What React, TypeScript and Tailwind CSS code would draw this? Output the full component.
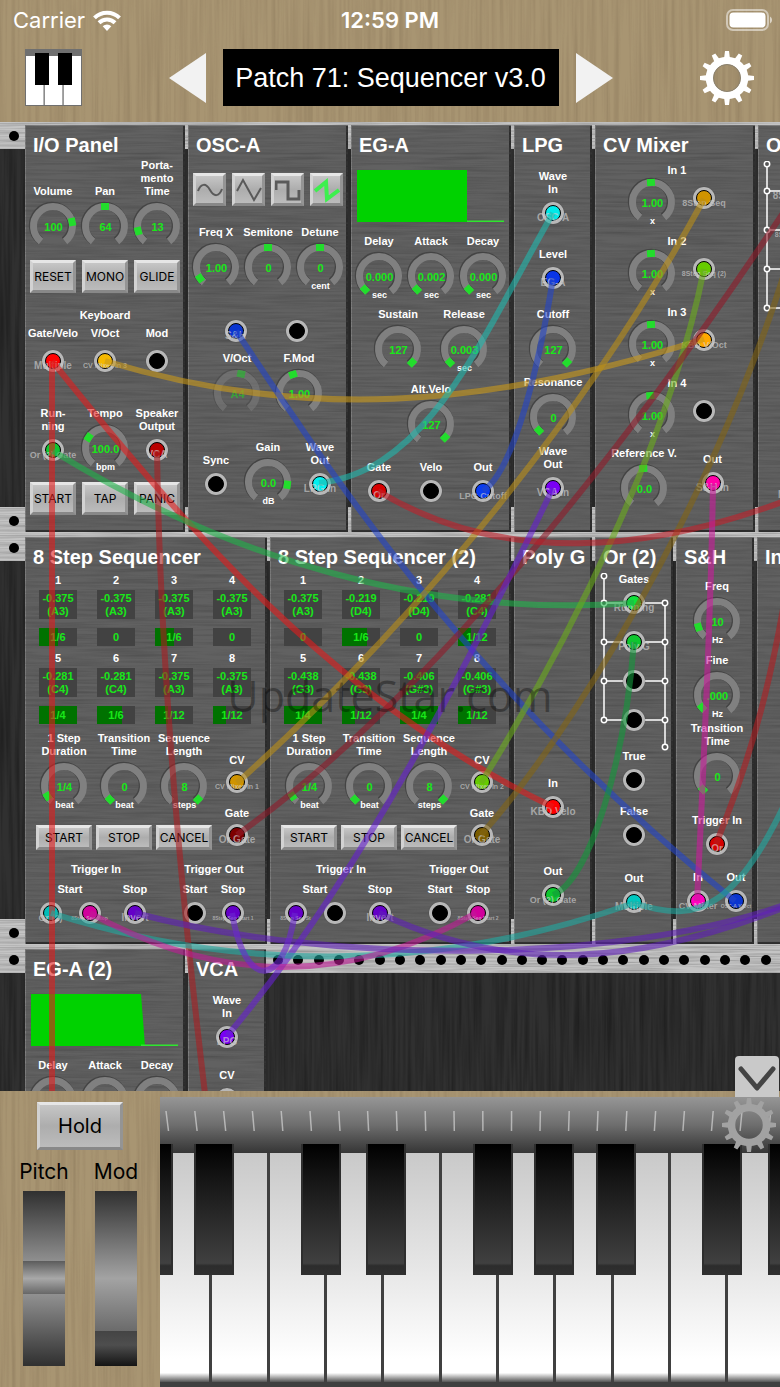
import type { ReactNode } from "react";

type TagSize = "lg" | "md" | "sm" | "xs";

const tagSizes: Record<TagSize, string> = {
  lg: "text-[10px]",
  md: "text-[9px]",
  sm: "text-[7px]",
  xs: "text-[5px]",
};

// ---------- textures ----------

function Textures() {
  return (
    <svg className="absolute size-0" aria-hidden="true">
      <filter id="wood" x="0" y="0" width="100%" height="100%">
        <feTurbulence type="fractalNoise" baseFrequency="0.25 0.006" numOctaves="3" seed="4" />
        <feColorMatrix values="0 0 0 0 0.25  0 0 0 0 0.18  0 0 0 0 0.1  1.6 0 0 0 -0.62" />
      </filter>
      <filter id="brushed" x="0" y="0" width="100%" height="100%">
        <feTurbulence type="fractalNoise" baseFrequency="0.012 0.6" numOctaves="3" seed="9" />
        <feColorMatrix values="0 0 0 0 0.1  0 0 0 0 0.1  0 0 0 0 0.1  1.5 0 0 0 -0.55" />
      </filter>
      <filter id="panel" x="0" y="0" width="100%" height="100%">
        <feTurbulence type="fractalNoise" baseFrequency="0.014 0.4" numOctaves="3" seed="6" />
        <feColorMatrix values="0 0 0 0 0.06  0 0 0 0 0.06  0 0 0 0 0.06  1.7 0 0 0 -0.62" />
      </filter>
      <filter id="slats" x="0" y="0" width="100%" height="100%">
        <feTurbulence type="fractalNoise" baseFrequency="0.25 0.008" numOctaves="3" seed="2" />
        <feColorMatrix values="0 0 0 0 0  0 0 0 0 0  0 0 0 0 0  1 0 0 0 -0.35" />
      </filter>
    </svg>
  );
}

function Grain({ kind }: { kind: string }) {
  return (
    <svg className="absolute inset-0 -z-10 size-full opacity-60" aria-hidden="true">
      <rect width="100%" height="100%" filter={`url(#${kind})`} />
    </svg>
  );
}

// ---------- controls ----------

function Label({ children, two }: { children: ReactNode; two?: boolean }) {
  return (
    <span
      className={`flex flex-col justify-end text-center text-[11px] leading-[13px] font-bold whitespace-pre-line text-white ${two ? "min-h-[26px]" : ""}`}
    >
      {children}
    </span>
  );
}

interface KnobProps {
  label?: string;
  value: string;
  angle: number;
  unit?: string;
  dim?: boolean;
}

function Knob({ label, value, angle, unit, dim }: KnobProps) {
  return (
    <label className="flex flex-col items-center gap-[5px]">
      {label && <Label>{label}</Label>}
      <span className="relative flex size-[46px] items-center justify-center pt-0.5 pl-px">
        <svg viewBox="0 0 46 46" className={`absolute inset-0 size-full overflow-visible ${dim ? "opacity-50" : ""}`}>
          <path d="M11 38.4 A19.5 19.5 0 1 1 35 38.4" fill="none" stroke="#444" strokeWidth="8" transform="translate(-0.7 -0.7)" />
          <path d="M11 38.4 A19.5 19.5 0 1 1 35 38.4" fill="none" stroke="#808080" strokeWidth="7" />
          <rect x="19" y="0" width="8" height="7" fill="#22dd2c" transform={`rotate(${angle} 23 23)`} />
        </svg>
        <span className={`relative text-[11px] font-bold text-[#19e819] ${dim ? "opacity-50" : ""}`}>{value}</span>
        {unit && <span className="absolute -bottom-px text-[9px] leading-[10px] font-bold text-white">{unit}</span>}
        <input type="range" aria-label={label ?? value} className="absolute inset-0 size-full opacity-0" />
      </span>
    </label>
  );
}

interface JackProps {
  label?: string;
  color?: string;
  tag?: string;
  size?: TagSize;
  gap?: string;
  two?: boolean;
}

function Jack({ label, color = "bg-black", tag, size = "lg", gap = "gap-1.5", two }: JackProps) {
  return (
    <div className={`flex flex-col items-center ${gap}`}>
      {label && <Label two={two}>{label}</Label>}
      <button
        type="button"
        aria-label={label ?? tag ?? "Jack"}
        className="relative flex size-[22px] items-center justify-center rounded-full bg-[#b8b8b8] shadow-[0_0_1px_#333]"
      >
        <span className={`size-4 rounded-full border border-black ${color}`} />
        {tag && (
          <span className={`absolute inset-x-[-20px] top-2.5 text-center leading-[12px] font-bold whitespace-nowrap text-[#d0d0d0]/65 ${tagSizes[size]}`}>
            {tag}
          </span>
        )}
      </button>
    </div>
  );
}

function PushButton({ children, className = "" }: { children: ReactNode; className?: string }) {
  return (
    <button
      type="button"
      className={`flex items-center justify-center border-[3px] border-t-[#e6e6e6] border-r-[#949494] border-b-[#888] border-l-[#d2d2d2] bg-linear-to-b from-[#c6c6c6] via-[#adadad] to-[#bcbcbc] font-[Inter,sans-serif] text-black ${className}`}
    >
      {children}
    </button>
  );
}

// ---------- rack ----------

function Rail({ className }: { className: string }) {
  return (
    <div
      className={`absolute inset-x-0 isolate flex h-[27px] items-center justify-between overflow-hidden bg-[#c4c4c4] pl-[9px] ${className}`}
    >
      <Grain kind="brushed" />
      <div className="-mr-[11px] flex flex-1 justify-between">
        {Array.from({ length: 39 }, (_, i) => (
          <span key={i} className="size-2.5 shrink-0 rounded-full bg-black" />
        ))}
      </div>
    </div>
  );
}

function RackRow({ children }: { children: ReactNode }) {
  return (
    <div className="relative isolate flex h-[412px] shrink-0 gap-[3px] overflow-hidden bg-[#303030] pt-[3px] pb-0.5 pl-[25px]">
      <Grain kind="slats" />
      <Rail className="top-0" />
      <Rail className="bottom-0" />
      {children}
    </div>
  );
}

function Module({ title, width = "w-[160px]", children }: { title: string; width?: string; children?: ReactNode }) {
  return (
    <section
      className={`relative isolate flex h-[407px] shrink-0 flex-col overflow-hidden bg-[#616161] pt-2 shadow-[inset_1px_1px_0_#808080,inset_-2px_-2px_0_#2a2a2a] ${width}`}
    >
      <Grain kind="panel" />
      <h2 className="h-6 pl-2 text-xl leading-6 font-bold whitespace-nowrap text-white">{title}</h2>
      {children}
    </section>
  );
}

const thirds = "grid grid-cols-[52px_52px_52px] justify-items-center pl-0.5";
const smallButton = "h-[33px] w-[46px] text-xs";
const wideButton = "mt-4 h-[25px] w-[56px] text-xs";

function IOPanel() {
  return (
    <Module title="I/O Panel">
      <div className={`${thirds} mt-0.5 items-end`}>
        <Knob label="Volume" value="100" angle={78} />
        <Knob label="Pan" value="64" angle={0} />
        <Knob label={"Porta-\nmento\nTime"} value="13" angle={-105} />
      </div>
      <div className={`${thirds} mt-[11px]`}>
        <PushButton className={smallButton}>RESET</PushButton>
        <PushButton className={smallButton}>MONO</PushButton>
        <PushButton className={smallButton}>GLIDE</PushButton>
      </div>
      <div className="mt-4">
        <Label>Keyboard</Label>
      </div>
      <div className={`${thirds} mt-[5px]`}>
        <Jack label="Gate/Velo" color="bg-[#ff0000]" tag="Multiple" gap="gap-2.5" />
        <Jack label="V/Oct" color="bg-[#f5b800]" tag="CV Mixer In 3" size="sm" gap="gap-2.5" />
        <Jack label="Mod" gap="gap-2.5" />
      </div>
      <div className={`${thirds} mt-[35px]`}>
        <Jack label={"Run-\nning"} color="bg-[#0fc62f]" tag="Or (2) Gate" size="md" />
        <Knob label="Tempo" value="100.0" angle={-57} unit="bpm" />
        <Jack label={"Speaker\nOutput"} color="bg-[#b80000]" tag="VCA" />
      </div>
      <div className={`${thirds} mt-[11px]`}>
        <PushButton className={smallButton}>START</PushButton>
        <PushButton className={smallButton}>TAP</PushButton>
        <PushButton className={smallButton}>PANIC</PushButton>
      </div>
    </Module>
  );
}

const waves = [
  { name: "Sine", d: "M1 14 C4 6 9 6 13 13 S22 20 25 12", color: "#5a5a5a", width: 2 },
  { name: "Triangle", d: "M1 14 L7 3 L18 23 L25 11", color: "#5a5a5a", width: 2 },
  { name: "Square", d: "M1 13 V5 H13 V22 H24 V13", color: "#5a5a5a", width: 3 },
  { name: "Sawtooth", d: "M1 14 L12 5 L13 22 L25 13", color: "#3df04e", width: 4 },
];

function Oscillator() {
  return (
    <Module title="OSC-A">
      <div className="mt-4 flex justify-between px-[5px]">
        {waves.map((wave) => (
          <PushButton key={wave.name} className="size-[33px]">
            <svg viewBox="0 0 26 26" className="size-[26px]" fill="none" stroke={wave.color} strokeWidth={wave.width}>
              <title>{wave.name}</title>
              <path d={wave.d} />
            </svg>
          </PushButton>
        ))}
      </div>
      <div className={`${thirds} mt-5`}>
        <Knob label="Freq X" value="1.00" angle={-125} />
        <Knob label="Semitone" value="0" angle={0} />
        <Knob label="Detune" value="0" angle={0} unit="cent" />
      </div>
      <div className="mt-[30px] flex justify-center gap-[39px] pr-1">
        <Jack color="bg-[#0a35d0]" tag="S&H" />
        <Jack />
      </div>
      <div className="mt-2.5 flex justify-center gap-4">
        <Knob label="V/Oct" value="A4" angle={12} dim />
        <Knob label="F.Mod" value="1.00" angle={-18} />
      </div>
      <div className={`${thirds} mt-[25px]`}>
        <Jack label="Sync" two />
        <Knob label="Gain" value="0.0" angle={98} unit="dB" />
        <Jack label={"Wave\nOut"} color="bg-[#00f0f0]" tag="LPG In" />
      </div>
    </Module>
  );
}

function Envelope({ title, shape }: { title: string; shape: string }) {
  return (
    <Module title={title}>
      <svg viewBox="0 0 147 52" className="mt-[13px] ml-1.5 h-[52px] w-[147px] shrink-0">
        <path d={shape} fill="#00d200" />
        <rect x="110" y="50.5" width="37" height="1.5" fill="#2ee62e" />
      </svg>
      <div className={`${thirds} mt-[13px]`}>
        <Knob label="Delay" value="0.000" angle={-134} unit="sec" />
        <Knob label="Attack" value="0.002" angle={-134} unit="sec" />
        <Knob label="Decay" value="0.000" angle={-134} unit="sec" />
      </div>
      <div className="mt-[9px] flex justify-center">
        <div className="flex w-[66px] justify-center">
          <Knob label="Sustain" value="127" angle={134} />
        </div>
        <div className="flex w-[66px] justify-center">
          <Knob label="Release" value="0.003" angle={-134} unit="sec" />
        </div>
      </div>
      <div className="mt-[11px] flex justify-center">
        <Knob label="Alt.Velo" value="127" angle={134} />
      </div>
      <div className={`${thirds} mt-[14px]`}>
        <Jack label="Gate" color="bg-[#d60000]" tag="Or" />
        <Jack label="Velo" />
        <Jack label="Out" color="bg-[#0a3cf0]" tag="LPG Cutoff" size="md" />
      </div>
    </Module>
  );
}

function LowPassGate() {
  return (
    <Module title="LPG" width="w-[78px]">
      <div className="mt-[13px]">
        <Jack label={"Wave\nIn"} color="bg-[#00eaea]" tag="OSC-A" />
      </div>
      <div className="mt-6">
        <Jack label="Level" color="bg-[#0a35e8]" tag="EG-A" />
      </div>
      <div className="mt-[19px] flex justify-center">
        <Knob label="Cutoff" value="127" angle={134} />
      </div>
      <div className="mt-1 flex justify-center">
        <Knob label="Resonance" value="0" angle={-134} />
      </div>
      <div className="mt-[5px]">
        <Jack label={"Wave\nOut"} color="bg-[#7a00f5]" tag="VCA In" />
      </div>
    </Module>
  );
}

const mixerInputs: { label: string; angle: number; color?: string; tag?: string; size?: TagSize }[] = [
  { label: "In 1", angle: -3, color: "bg-[#d09400]", tag: "8Step Seq", size: "md" },
  { label: "In 2", angle: -3, color: "bg-[#66cc00]", tag: "8Step Seq (2)", size: "sm" },
  { label: "In 3", angle: -3, color: "bg-[#ffa800]", tag: "KBD V/Oct", size: "md" },
  { label: "In 4", angle: -5 },
];

function Mixer() {
  return (
    <Module title="CV Mixer">
      <div className="mt-[7px] flex flex-col gap-2.5">
        {mixerInputs.map((input) => (
          <div key={input.label} className="flex flex-col gap-0.5">
            <div className="pl-1">
              <Label>{input.label}</Label>
            </div>
            <div className="flex items-start gap-[18px] pl-[34px]">
              <Knob value="1.00" angle={input.angle} unit="x" />
              <div className="pt-2">
                <Jack color={input.color} tag={input.tag} size={input.size} />
              </div>
            </div>
          </div>
        ))}
      </div>
      <div className="mt-[9px] flex items-start pl-0.5">
        <div className="flex w-[94px] justify-center">
          <Knob label="Reference V." value="0.0" angle={-2} />
        </div>
        <div className="w-[43px] pt-1.5">
          <Jack label="Out" color="bg-[#ff00a8]" tag="S&H In" />
        </div>
      </div>
    </Module>
  );
}

type Gate = { color?: string; tag?: string; size?: TagSize };

function OrGate({ title, gates, out }: { title: string; gates: Gate[]; out: string }) {
  const rows = [30, 69, 108, 147];
  return (
    <Module title={title} width="w-[78px]">
      <div className="relative mt-1 flex flex-col items-center gap-1.5">
        <svg className="absolute top-0 left-0 h-[178px] w-[78px]" fill="none" stroke="#fff" strokeWidth="1.5">
          <path d="M9 6 V144 M70 33 V171" />
          {rows.map((y) => (
            <path key={y} d={`M12 ${y} H67`} />
          ))}
          {[3, ...rows].map((y) => (
            <circle key={y} cx="9" cy={y} r="2.7" fill="#555" />
          ))}
          {[...rows, 174].map((y) => (
            <circle key={y} cx="70" cy={y} r="2.7" fill="#555" />
          ))}
        </svg>
        <div className="relative">
          <Label>Gates</Label>
        </div>
        <div className="relative flex flex-col gap-[17px]">
          {gates.map((gate, i) => (
            <Jack key={i} color={gate.color} tag={gate.tag} size={gate.size} />
          ))}
        </div>
      </div>
      <div className="mt-[19px]">
        <Jack label="True" />
      </div>
      <div className="mt-[14px]">
        <Jack label="False" />
      </div>
      <div className="mt-[26px]">
        <Jack label="Out" color={out} tag="Multiple" />
      </div>
    </Module>
  );
}

// value, pitch, length, fill (percent)
type Step = [string, string, string, number];

const seqOne: Step[] = [
  ["-0.375", "(A3)", "1/6", 50],
  ["-0.375", "(A3)", "0", 0],
  ["-0.375", "(A3)", "1/6", 50],
  ["-0.375", "(A3)", "0", 0],
  ["-0.281", "(C4)", "1/4", 100],
  ["-0.281", "(C4)", "1/6", 67],
  ["-0.375", "(A3)", "1/12", 33],
  ["-0.375", "(A3)", "1/12", 33],
];

const seqTwo: Step[] = [
  ["-0.375", "(A3)", "0", 0],
  ["-0.219", "(D4)", "1/6", 67],
  ["-0.219", "(D4)", "0", 0],
  ["-0.281", "(C4)", "1/12", 33],
  ["-0.438", "(G3)", "1/4", 100],
  ["-0.438", "(G3)", "1/12", 33],
  ["-0.406", "(G#3)", "1/4", 100],
  ["-0.406", "(G#3)", "1/12", 33],
];

interface SequencerProps {
  title: string;
  width: string;
  steps: Step[];
  cv: JackProps;
  gate: JackProps;
  jacks: JackProps[];
}

function Sequencer({ title, width, steps, cv, gate, jacks }: SequencerProps) {
  return (
    <Module title={title} width={width}>
      <div className="mt-[5px] grid grid-cols-[58px_58px_58px_58px] gap-y-1.5 pl-1">
        {steps.map(([value, pitch, length, fill], i) => (
          <div key={i} className="flex flex-col items-center">
            <Label>{i + 1}</Label>
            <button
              type="button"
              className="mt-[3px] h-[29px] w-[38px] bg-[#424242] text-[11px] leading-[13px] font-bold whitespace-nowrap text-[#19e819]"
            >
              {value}
              <br />
              {pitch}
            </button>
            <button type="button" className="relative mt-[9px] h-[18px] w-[38px] bg-[#424242] text-[11px] font-bold text-[#19e819]">
              <span className="absolute inset-y-0 left-0 bg-[#007200]" style={{ width: `${fill}%` }} />
              <span className="relative">{length}</span>
            </button>
          </div>
        ))}
      </div>
      <div className="mt-2 flex pl-[9px]">
        <div className="grid grid-cols-[60px_60px_60px] justify-items-center">
          <Knob label={"1 Step\nDuration"} value="1/4" angle={-122} unit="beat" />
          <Knob label={"Transition\nTime"} value="0" angle={-134} unit="beat" />
          <Knob label={"Sequence\nLength"} value="8" angle={134} unit="steps" />
          <PushButton className={wideButton}>START</PushButton>
          <PushButton className={wideButton}>STOP</PushButton>
          <PushButton className={wideButton}>CANCEL</PushButton>
        </div>
        <div className="flex w-[46px] flex-col gap-[14px] pt-[22px]">
          <Jack label="CV" gap="gap-1" {...cv} />
          <Jack label="Gate" gap="gap-1" {...gate} />
        </div>
      </div>
      <div className="mt-[13px] flex gap-[15px] pl-1.5">
        <div className="w-[130px]">
          <Label>Trigger In</Label>
          <div className="mt-[7px] flex">
            <div className="flex w-[78px] flex-col gap-1.5">
              <Label>Start</Label>
              <div className="flex justify-center gap-[17px]">
                <Jack {...jacks[0]} />
                <Jack {...jacks[1]} />
              </div>
            </div>
            <div className="w-[52px]">
              <Jack label="Stop" {...jacks[2]} />
            </div>
          </div>
        </div>
        <div className="w-[76px]">
          <Label>Trigger Out</Label>
          <div className="mt-[7px] grid grid-cols-2">
            <Jack label="Start" />
            <Jack label="Stop" {...jacks[3]} />
          </div>
        </div>
      </div>
    </Module>
  );
}

function PolyGate() {
  return (
    <Module title="Poly G" width="w-[78px]">
      <div className="mt-auto">
        <Jack label="In" color="bg-[#ff0000]" tag="KBD Velo" />
      </div>
      <div className="mt-[47px] pb-[38px]">
        <Jack label="Out" color="bg-[#0fc62f]" tag="Or (2) Gate" size="md" />
      </div>
    </Module>
  );
}

function SampleHold() {
  return (
    <Module title="S&H" width="w-[78px]">
      <div className="mt-[11px] flex flex-col items-center gap-2.5 pl-1">
        <Knob label="Freq" value="10" angle={-108} unit="Hz" />
        <Knob label="Fine" value=".000" angle={-130} unit="Hz" />
      </div>
      <div className="mt-1 flex justify-center pl-1">
        <Knob label={"Transition\nTime"} value="0" angle={-134} />
      </div>
      <div className="mt-[15px] pl-1">
        <Jack label="Trigger In" color="bg-[#d60000]" tag="Or" />
      </div>
      <div className="mt-4 flex justify-center gap-4 pl-1">
        <Jack label="In" color="bg-[#ff00c0]" tag="CV Mixer" size="md" />
        <Jack label="Out" color="bg-[#0a35d0]" tag="OSC-A V/Oct" size="xs" />
      </div>
    </Module>
  );
}

function Vca() {
  return (
    <Module title="VCA" width="w-[78px]">
      <div className="mt-[13px]">
        <Jack label={"Wave\nIn"} color="bg-[#7a00f5]" tag="LPG" />
      </div>
      <div className="mt-[21px]">
        <Jack label="CV" />
      </div>
    </Module>
  );
}

// patch cables, in rack coordinates
const cables: [string, string][] = [
  ["#e11d1d", "M52 239 V980"],
  ["#e11d1d", "M52 239 C180 398 330 578 553 685"],
  ["#1fb34a", "M53 329 C230 438 430 496 634 481"],
  ["#a81e22", "M157 329 C160 540 182 780 206 980"],
  ["#c99a1a", "M105 239 C300 298 480 288 704 217"],
  ["#1fb8ae", "M319 361 C430 348 480 218 553 91"],
  ["#2344c8", "M236 209 C330 348 460 558 735 779"],
  ["#2344c8", "M553 156 C540 238 515 348 483 369"],
  ["#b98d18", "M704 77 C600 268 440 478 237 661"],
  ["#6aac1c", "M704 147 C670 318 570 518 481 661"],
  ["#8f1a2a", "M797 70 C640 308 440 568 237 713"],
  ["#826414", "M797 108 C740 318 600 578 481 713"],
  ["#c0202a", "M378 369 C500 443 650 433 800 373"],
  ["#661fd0", "M553 366 C475 528 360 758 227 914"],
  ["#cc1a9c", "M713 362 C711 498 703 658 697 779"],
  ["#12983a", "M634 520 C625 638 590 758 553 773"],
  ["#20a8a0", "M51 791 C230 848 430 853 634 781"],
  ["#20a8a0", "M634 781 C700 803 740 788 800 648"],
  ["#c01a96", "M90 791 C220 863 350 863 476 791"],
  ["#5f1fb8", "M135 791 C330 843 620 843 790 781"],
  ["#6a28d0", "M232 791 C245 868 283 868 295 791"],
  ["#5f1fb8", "M379 791 C510 853 640 843 790 783"],
  ["#b01e22", "M716 722 C750 638 775 558 797 398"],
];

function Cables() {
  return (
    <svg className="pointer-events-none absolute inset-0 size-full" fill="none" strokeWidth="6">
      {cables.map(([color, d]) => (
        <path key={d} d={d} stroke={color} strokeOpacity="0.6" />
      ))}
    </svg>
  );
}

function Rack() {
  return (
    <main className="relative flex min-h-0 flex-1 flex-col overflow-hidden bg-[#2d2d2d]">
      <RackRow>
        <IOPanel />
        <Oscillator />
        <Envelope title="EG-A" shape="M0 0 H110 V52 H0 Z" />
        <LowPassGate />
        <Mixer />
        <OrGate
          title="Or"
          gates={[
            { color: "bg-[#900000]", tag: "8Step Seq" },
            { color: "bg-[#7a5c00]", tag: "8Step Seq (2)", size: "sm" },
            {},
            {},
          ]}
          out="bg-[#d60000]"
        />
      </RackRow>
      <RackRow>
        <Sequencer
          title="8 Step Sequencer"
          width="w-[242px]"
          steps={seqOne}
          cv={{ color: "bg-[#d09400]", tag: "CV Mixer In 1", size: "sm" }}
          gate={{ color: "bg-[#7d0000]", tag: "Or Gate" }}
          jacks={[
            { color: "bg-[#00bdb8]", tag: "Or (2)", size: "md" },
            { color: "bg-[#d0009c]", tag: "8Step Seq Stop", size: "xs" },
            { color: "bg-[#6400c8]", tag: "Invert" },
            { color: "bg-[#6400c8]", tag: "8Step Seq Start 1", size: "xs" },
          ]}
        />
        <Sequencer
          title="8 Step Sequencer (2)"
          width="w-[241px]"
          steps={seqTwo}
          cv={{ color: "bg-[#66cc00]", tag: "CV Mixer In 2", size: "sm" }}
          gate={{ color: "bg-[#7a5c00]", tag: "Or Gate" }}
          jacks={[
            { color: "bg-[#6400c8]", tag: "8Step Seq St", size: "xs" },
            {},
            { color: "bg-[#6400c8]", tag: "Invert" },
            { color: "bg-[#d0009c]", tag: "8Step Seq Start 2", size: "xs" },
          ]}
        />
        <PolyGate />
        <OrGate
          title="Or (2)"
          gates={[{ color: "bg-[#10e03a]", tag: "Running" }, { color: "bg-[#0fc62f]", tag: "Poly G" }, {}, {}]}
          out="bg-[#00c8c0]"
        />
        <SampleHold />
        <Module title="Invert" width="w-[78px]" />
      </RackRow>
      <RackRow>
        <Envelope title="EG-A (2)" shape="M0 0 H110 L114 52 H0 Z" />
        <Vca />
      </RackRow>
      <Cables />
      <p className="pointer-events-none absolute inset-x-0 top-[546px] text-center font-['Open_Sans',sans-serif] text-[43px] leading-[56px] text-black/35">
        UpdateStar.com
      </p>
    </main>
  );
}

// ---------- header ----------

function Gear({ className, hole }: { className: string; hole?: string }) {
  return (
    <svg viewBox="0 0 56 56" className={className} fill="none" stroke="currentColor">
      <circle cx="28" cy="28" r="17.5" strokeWidth="7.5" />
      {Array.from({ length: 12 }, (_, i) => (
        <path key={i} d="M25 9 L26 1 H30 L31 9 Z" fill="currentColor" stroke="none" transform={`rotate(${i * 30} 28 28)`} />
      ))}
      {hole && <circle cx="28" cy="28" r="13.5" stroke={hole} strokeWidth="1" />}
    </svg>
  );
}

function Header() {
  return (
    <header className="relative isolate shrink-0 bg-[#a89572] pb-4">
      <Grain kind="wood" />
      <div className="grid h-10 grid-cols-3 items-center font-[Inter,sans-serif] text-[22px] text-white">
        <div className="flex items-center gap-2 pl-[13px]">
          <span>Carrier</span>
          <svg viewBox="0 0 28 21" className="h-[21px] w-7" fill="none" stroke="#fff" strokeWidth="4">
            <path d="M1.5 7.8 A17.7 17.7 0 0 1 26.5 7.8" />
            <path d="M6 12.8 A11.5 11.5 0 0 1 22 12.8" />
            <path d="M14 21 L9.7 16.2 A6.2 6.2 0 0 1 18.3 16.2 Z" fill="#fff" stroke="none" />
          </svg>
        </div>
        <span className="text-center font-semibold">12:59 PM</span>
        <svg viewBox="0 0 48 22" className="mr-1.5 h-[22px] w-12 justify-self-end">
          <rect x="1" y="1" width="41" height="20" rx="6" fill="none" stroke="#fff" strokeOpacity="0.5" strokeWidth="2" />
          <rect x="3.5" y="3.5" width="36" height="15" rx="4" fill="#fff" />
          <path d="M44 7.5 A4 4 0 0 1 44 14.5 Z" fill="#fff" fillOpacity="0.6" />
        </svg>
      </div>
      <div className="flex items-center justify-between px-[25px] pt-[9px]">
        <button type="button" aria-label="Keyboard">
          <svg viewBox="0 0 57 57" className="size-[57px]">
            <rect width="57" height="57" fill="#6f6f6f" />
            <path d="M1 7 H18.5 V56 H1 Z M19.8 7 H37.4 V56 H19.8 Z M38.7 7 H56 V56 H38.7 Z" fill="#fff" />
            <path d="M10 4 H24 V36 H10 Z M33 4 H47 V36 H33 Z" fill="#000" />
          </svg>
        </button>
        <div className="flex items-center gap-[17px]">
          <button type="button" aria-label="Previous patch">
            <svg viewBox="0 0 37 50" className="h-[50px] w-[37px]">
              <path d="M0 25 L37 0 V50 Z" fill="#f2f2f2" />
            </svg>
          </button>
          <h1 className="flex h-[57px] w-[336px] items-center justify-center bg-black pt-0.5 text-[27px] whitespace-nowrap text-white">
            Patch 71: Sequencer v3.0
          </h1>
          <button type="button" aria-label="Next patch">
            <svg viewBox="0 0 37 50" className="h-[50px] w-[37px]">
              <path d="M37 25 L0 0 V50 Z" fill="#f2f2f2" />
            </svg>
          </button>
        </div>
        <button type="button" aria-label="Settings" className="text-white">
          <Gear className="size-14" hole="#8b8270" />
        </button>
      </div>
    </header>
  );
}

// ---------- keyboard ----------

// where the black key sits on the left edge of each white key
const whiteKeys = [
  "-left-[22px]",
  "-left-[18px]",
  "",
  "-left-[26px]",
  "-left-[18px]",
  "",
  "-left-[26px]",
  "-left-[22px]",
  "-left-[18px]",
  "",
  "-left-[26px]",
  "-left-[18px]",
];

function PianoKeys() {
  return (
    <div className="flex min-w-0 flex-1 flex-col overflow-hidden">
      <div className="h-14 shrink-0 bg-linear-to-b from-[#969696] via-[#6e6e6e] to-[#363636]">
        <svg className="size-full" stroke="#d4d4d4" strokeWidth="1.5" strokeOpacity="0.7">
          {Array.from({ length: 22 }, (_, i) => (
            <path key={i} d={`M${6 + i * 28.8} 14 l${(2.5 - i * 0.22).toFixed(1)} 20`} />
          ))}
        </svg>
      </div>
      <div className="-mr-[60px] -ml-2 grid flex-1 grid-cols-12 bg-[#404040] pb-[5px]">
        {whiteKeys.map((black, i) => (
          <div key={i} className="relative border-l-[3px] border-[#404040]">
            <button
              type="button"
              aria-label={`White key ${i + 1}`}
              className="block size-full bg-[linear-gradient(to_bottom,#c9c9c9,#e6e6e6_50%,#fff_90%,#fff_96%,#555)]"
            />
            {black && (
              <button
                type="button"
                aria-label={`Black key ${i + 1}`}
                className={`absolute -top-[9px] z-10 h-[131px] w-10 border-x-2 border-[#2e2e2e] bg-[linear-gradient(to_bottom,#000,#141414_25%,#404040_91%,#2c2c2c_93%,#303030)] ${black}`}
              />
            )}
          </div>
        ))}
      </div>
    </div>
  );
}

function Keyboard() {
  return (
    <footer className="relative isolate flex h-[296px] shrink-0 bg-[#a89572] pt-1.5">
      <Grain kind="wood" />
      <div className="flex w-[160px] shrink-0 flex-col items-center pt-[5px] font-[Inter,sans-serif] text-black">
        <PushButton className="h-12 w-[86px] text-xl">Hold</PushButton>
        <div className="mt-2 grid w-36 grid-cols-2 justify-items-center text-[21px]">
          <label className="flex flex-col items-center gap-[5px]">
            <span className="leading-7">Pitch</span>
            <span className="relative block h-[175px] w-[42px] bg-[linear-gradient(to_bottom,#303030,#8f8f8f_40%,#5c5c5c_40%,#a8a8a8_50%,#666_59%,#919191_59%,#303030)]">
              <input type="range" className="absolute inset-0 size-full opacity-0" />
            </span>
          </label>
          <label className="flex flex-col items-center gap-[5px]">
            <span className="leading-7">Mod</span>
            <span className="relative block h-[175px] w-[42px] bg-[linear-gradient(to_bottom,#303030,#a3a3a3_50%,#6b6b6b_80%,#444_80%,#4e4e4e_88%,#141414)]">
              <input type="range" className="absolute inset-0 size-full opacity-0" />
            </span>
          </label>
        </div>
      </div>
      <PianoKeys />
      <button type="button" aria-label="Hide keyboard" className="absolute -top-[35px] right-px z-20 h-[41px] w-11 rounded-t-sm bg-[#c9c9c9]">
        <svg viewBox="0 0 44 41" className="size-full" fill="none" stroke="#444" strokeWidth="5" strokeLinecap="round" strokeLinejoin="round">
          <path d="M6 13 L22 32 L38 13" />
        </svg>
      </button>
      <button type="button" aria-label="Keyboard settings" className="absolute top-1.5 right-[3px] z-20 text-[#a2a2a2]">
        <Gear className="size-14" />
      </button>
    </footer>
  );
}

export default function App() {
  return (
    <div className="flex h-screen flex-col overflow-hidden font-['Liberation_Sans',Arial,sans-serif]">
      <Textures />
      <Header />
      <Rack />
      <Keyboard />
    </div>
  );
}
